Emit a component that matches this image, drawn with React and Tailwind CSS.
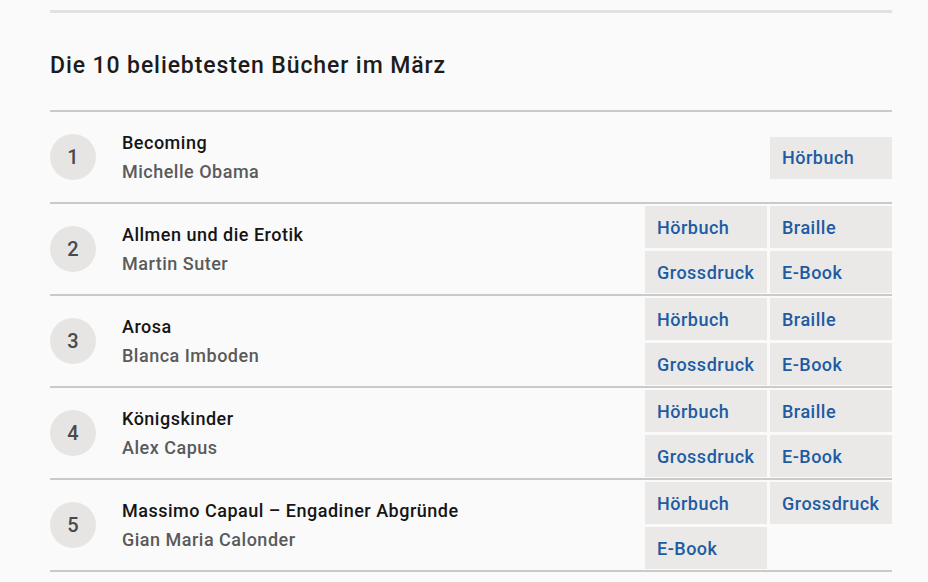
const books = [
  { n: 1, title: "Becoming", author: "Michelle Obama", formats: ["Hörbuch"] },
  { n: 2, title: "Allmen und die Erotik", author: "Martin Suter", formats: ["Hörbuch", "Braille", "Grossdruck", "E-Book"] },
  { n: 3, title: "Arosa", author: "Blanca Imboden", formats: ["Hörbuch", "Braille", "Grossdruck", "E-Book"] },
  { n: 4, title: "Königskinder", author: "Alex Capus", formats: ["Hörbuch", "Braille", "Grossdruck", "E-Book"] },
  { n: 5, title: "Massimo Capaul – Engadiner Abgründe", author: "Gian Maria Calonder", formats: ["Hörbuch", "Grossdruck", "E-Book"] },
];

function FormatLink({ label, single }) {
  return (
    <a
      href="#"
      className={`h-[42px] flex items-center pl-3 bg-[#ebe9e7] text-[#1d5ca3] text-[18px] font-medium tracking-[0.5px] ${single ? "col-start-2" : ""}`}
    >
      {label}
    </a>
  );
}

export default function App() {
  return (
    <div className="min-h-[582px] bg-[#fbfafa] pl-[50px] pr-[36px] pt-[10px] font-['Roboto',sans-serif]">
      <div className="h-[3px] bg-[#e2e0e0]" />
      <h2 className="mt-[39px] mb-[30px] text-[23px] leading-[28px] font-medium tracking-[0.9px] text-[#1c1c1c]">
        Die 10 beliebtesten Bücher im März
      </h2>
      <ul className="border-b-2 border-[#cbcaca]">
        {books.map((b) => (
          <li key={b.n} className="flex items-center h-[92px] border-t-2 border-[#cbcaca]">
            <div className="w-[46px] h-[46px] rounded-full bg-[#e7e5e3] flex items-center justify-center text-[20px] font-medium text-[#4a4a4a] shrink-0">
              {b.n}
            </div>
            <div className="ml-[26px] flex-1 flex flex-col gap-[8px]">
              <div className="text-[18px] leading-[21px] font-medium tracking-[0.5px] text-[#151515]">{b.title}</div>
              <div className="text-[18px] leading-[21px] font-medium tracking-[0.5px] text-[#5a5a5a]">{b.author}</div>
            </div>
            <div className="grid grid-cols-[122px_122px] gap-x-[3px] gap-y-[3px] pt-[2px] pb-[1px]">
              {b.formats.map((f) => (
                <FormatLink key={f} label={f} single={b.formats.length === 1} />
              ))}
            </div>
          </li>
        ))}
      </ul>
    </div>
  );
}
